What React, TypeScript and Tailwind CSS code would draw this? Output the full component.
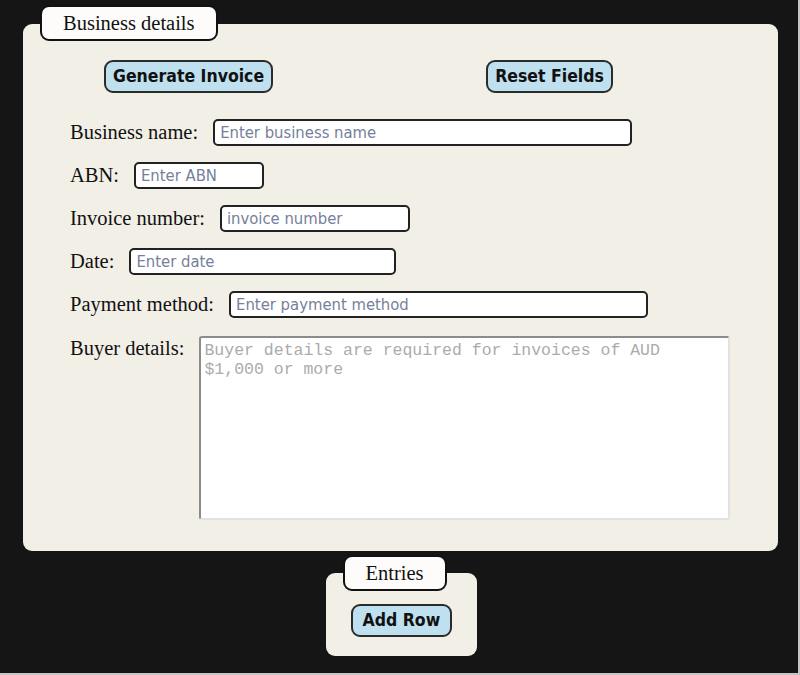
import React from 'react';

const serif = "font-['Liberation_Serif','Times_New_Roman',serif]";
const sans = "font-['DejaVu_Sans_Condensed','DejaVu_Sans',Tahoma,sans-serif]";

function Tab({ label }: { label: string }) {
    return (
        <div
            className={`relative z-10 ml-[17px] self-start h-[36px] px-[21px] flex items-center rounded-[9px] border-2 border-[#111] bg-[#fdfcfa] text-[20.5px] text-[#111] ${serif}`}
        >
            {label}
        </div>
    );
}

function ActionButton({ label, className = 'px-[7px]' }: { label: string; className?: string }) {
    return (
        <button
            type="button"
            className={`h-[33px] rounded-[9px] border-2 border-[#2b2b2b] bg-[#bfe0ef] text-[17.5px] font-bold text-[#111] ${sans} ${className}`}
        >
            {label}
        </button>
    );
}

interface FieldProps {
    label: string;
    placeholder: string;
    width: string;
}

function Field({ label, placeholder, width }: FieldProps) {
    return (
        <div className="flex items-center gap-[15px] h-[27px]">
            <label className={`text-[20.5px] text-[#111] ${serif}`}>{label}</label>
            <input
                type="text"
                placeholder={placeholder}
                className={`${width} h-[27px] rounded-[5px] border-2 border-[#222] bg-white px-[5px] text-[16.5px] ${sans} placeholder:text-[#76809a] outline-none`}
            />
        </div>
    );
}

const fields: FieldProps[] = [
    { label: 'Business name:', placeholder: 'Enter business name', width: 'w-[419px]' },
    { label: 'ABN:', placeholder: 'Enter ABN', width: 'w-[130px]' },
    { label: 'Invoice number:', placeholder: 'invoice number', width: 'w-[190px]' },
    { label: 'Date:', placeholder: 'Enter date', width: 'w-[267px]' },
    { label: 'Payment method:', placeholder: 'Enter payment method', width: 'w-[419px]' },
];

export default function App() {
    return (
        <div className="min-h-[675px] w-[800px] bg-[#151515] border-r-2 border-b-2 border-[#c4c4c4] flex flex-col pt-[5px] pl-[23px] pr-[20px]">
            <div className="flex flex-col">
                <Tab label="Business details" />
                <div className="-mt-[17px] rounded-[9px] bg-[#f2efe7] pt-[36px] pb-[31px] pl-[47px]">
                    <div className="flex items-center pl-[34px]">
                        <ActionButton label="Generate Invoice" />
                        <ActionButton label="Reset Fields" className="px-[7px] ml-[213px]" />
                    </div>
                    <div className="mt-[26px] flex flex-col gap-[16px]">
                        {fields.map((f) => (
                            <Field key={f.label} {...f} />
                        ))}
                        <div className="flex items-start gap-[15px] mt-[2px]">
                            <label className={`-mt-[3px] text-[20.5px] text-[#111] ${serif}`}>Buyer details:</label>
                            <textarea
                                placeholder="Buyer details are required for invoices of AUD $1,000 or more"
                                className="w-[531px] h-[184px] resize-none rounded-[3px] border-2 border-t-[#8c8c8c] border-l-[#8c8c8c] border-r-[#e2e2e2] border-b-[#e2e2e2] bg-white px-[3px] py-[3px] text-[16.5px] leading-[19px] font-['Liberation_Mono','Courier_New',monospace] placeholder:text-[#ababab] outline-none"
                            />
                        </div>
                    </div>
                </div>
            </div>

            <div className="mt-[4px] self-center flex flex-col w-[151px] ml-[1px]">
                <Tab label="Entries" />
                <div className="-mt-[18px] rounded-[9px] bg-[#f2efe7] pt-[31px] pb-[19px] pl-[25px]">
                    <ActionButton label="Add Row" className="px-[10px]" />
                </div>
            </div>
        </div>
    );
}
